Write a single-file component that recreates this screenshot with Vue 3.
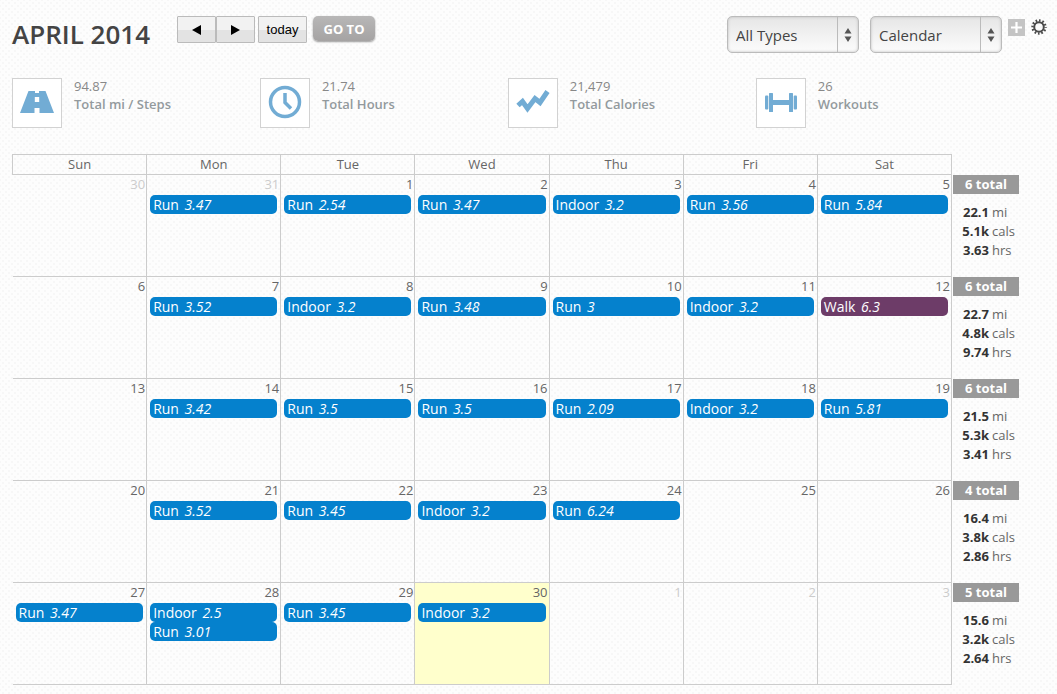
<script setup>
import { ref } from 'vue'

const type = ref('All Types')
const view = ref('Calendar')

const stats = [
  { icon: 'road', value: '94.87', label: 'Total mi / Steps' },
  { icon: 'clock', value: '21.74', label: 'Total Hours' },
  { icon: 'chart', value: '21,479', label: 'Total Calories' },
  { icon: 'weights', value: '26', label: 'Workouts' },
]

const weekdays = ['Sun', 'Mon', 'Tue', 'Wed', 'Thu', 'Fri', 'Sat']

const run = (distance) => ({ name: 'Run', distance })
const indoor = (distance) => ({ name: 'Indoor', distance })
const walk = (distance) => ({ name: 'Walk', distance, walk: true })

const weeks = [
  {
    first: 30, lastOfMonth: 31,
    events: [[], [run('3.47')], [run('2.54')], [run('3.47')], [indoor('3.2')], [run('3.56')], [run('5.84')]],
    total: 6, mi: '22.1', cals: '5.1k', hrs: '3.63',
  },
  {
    first: 6,
    events: [[], [run('3.52')], [indoor('3.2')], [run('3.48')], [run('3')], [indoor('3.2')], [walk('6.3')]],
    total: 6, mi: '22.7', cals: '4.8k', hrs: '9.74',
  },
  {
    first: 13,
    events: [[], [run('3.42')], [run('3.5')], [run('3.5')], [run('2.09')], [indoor('3.2')], [run('5.81')]],
    total: 6, mi: '21.5', cals: '5.3k', hrs: '3.41',
  },
  {
    first: 20,
    events: [[], [run('3.52')], [run('3.45')], [indoor('3.2')], [run('6.24')], [], []],
    total: 4, mi: '16.4', cals: '3.8k', hrs: '2.86',
  },
  {
    first: 27, lastOfMonth: 30, today: 30,
    events: [[run('3.47')], [indoor('2.5'), run('3.01')], [run('3.45')], [indoor('3.2')], [], [], []],
    total: 5, mi: '15.6', cals: '3.2k', hrs: '2.64',
  },
].map((week, w) => ({
  ...week,
  days: week.events.map((events, i) => {
    const raw = week.first + i
    const wraps = week.lastOfMonth && raw > week.lastOfMonth
    return {
      number: wraps ? raw - week.lastOfMonth : raw,
      other: w === 0 ? !wraps : Boolean(wraps),
      today: raw === week.today,
      events,
    }
  }),
}))
</script>

<template>
  <main class="page">
    <header class="toolbar">
      <h1>APRIL 2014</h1>
      <div class="nav">
        <div class="pair">
          <button type="button" class="nav-btn" aria-label="Previous month">
            <svg width="10" height="10" viewBox="0 0 10 10"><path d="M0 5 9 0V10Z" /></svg>
          </button>
          <button type="button" class="nav-btn" aria-label="Next month">
            <svg width="10" height="10" viewBox="0 0 10 10"><path d="M9 5 0 0V10Z" /></svg>
          </button>
        </div>
        <button type="button" class="nav-btn today-btn">today</button>
        <button type="button" class="goto">GO TO</button>
      </div>
      <div class="filters">
        <div class="picker">
          <select v-model="type" aria-label="Workout type"><option>All Types</option></select>
          <svg class="arrows" width="8" height="14" viewBox="0 0 8 14"><path d="M4 0 7.5 5.5H.5ZM4 14 .5 8.500H7.500Z" /></svg>
        </div>
        <div class="picker">
          <select v-model="view" aria-label="View"><option>Calendar</option></select>
          <svg class="arrows" width="8" height="14" viewBox="0 0 8 14"><path d="M4 0 7.5 5.5H.5ZM4 14 .5 8.500H7.500Z" /></svg>
        </div>
        <div class="tools">
          <button type="button" class="add" aria-label="Add workout">
            <svg width="17" height="17" viewBox="0 0 17 17"><path d="M8.500 3V14M3 8.500H14" stroke="#fff" stroke-width="2.200" /></svg>
          </button>
          <button type="button" class="gear" aria-label="Settings">
            <svg width="16" height="16" viewBox="0 0 16 16" fill="none" stroke="#4a4a4a">
              <circle cx="8" cy="8" r="4.800" stroke-width="2" />
              <circle cx="8" cy="8" r="6.500" stroke-width="2.400" stroke-dasharray="1.600 1.803" stroke-dashoffset="0.800" />
            </svg>
          </button>
        </div>
      </div>
    </header>

    <section class="stats" aria-label="Monthly totals">
      <div v-for="s in stats" :key="s.label" class="stat">
        <div class="tile">
          <svg v-if="s.icon === 'road'" width="34" height="22" viewBox="0 0 34 22">
            <path fill="#72acd4" fill-rule="evenodd" d="M8.500 0H15V2H19V0H25.500L34 22H19.500V17H14.500V22H0ZM14.800 6V11H19.200V6Z" />
          </svg>
          <svg v-else-if="s.icon === 'clock'" width="34" height="34" viewBox="0 0 34 34" fill="none" stroke="#72acd4">
            <circle cx="17" cy="17" r="14.500" stroke-width="3.500" />
            <path d="M17 8V17.500L23 23.500" stroke-width="3.500" />
          </svg>
          <svg v-else-if="s.icon === 'chart'" width="34" height="24" viewBox="0 0 34 24">
            <path fill="none" stroke="#72acd4" stroke-width="5" d="M2 15.500 6.500 11.500 11.500 18.500 19 8.500 24 12.500 31.500 1.500" />
          </svg>
          <svg v-else width="32" height="19" viewBox="0 0 32 19" fill="#72acd4">
            <rect x="0" y="2.500" width="3.300" height="14" rx="1" />
            <rect x="4" y="0" width="4" height="19" rx=".5" />
            <rect x="8" y="7" width="16" height="5" />
            <rect x="24" y="0" width="4" height="19" rx=".5" />
            <rect x="28.700" y="2.500" width="3.300" height="14" rx="1" />
          </svg>
        </div>
        <div class="figures">
          <div>{{ s.value }}</div>
          <div class="label">{{ s.label }}</div>
        </div>
      </div>
    </section>

    <table class="calendar">
      <thead>
        <tr>
          <th v-for="d in weekdays" :key="d" scope="col">{{ d }}</th>
          <td class="summary"></td>
        </tr>
      </thead>
      <tbody>
        <tr v-for="week in weeks" :key="week.first">
          <td v-for="day in week.days" :key="day.number" class="day" :class="{ other: day.other, today: day.today }">
            <div class="number">{{ day.number }}</div>
            <a v-for="e in day.events" :key="e.distance" href="#" class="event" :class="{ walk: e.walk }">{{ e.name }} <em>{{ e.distance }}</em></a>
          </td>
          <td class="summary">
            <div class="total">{{ week.total }} total</div>
            <div class="sums">
              <b>{{ week.mi }}</b><span>mi</span>
              <b>{{ week.cals }}</b><span>cals</span>
              <b>{{ week.hrs }}</b><span>hrs</span>
            </div>
          </td>
        </tr>
      </tbody>
    </table>
  </main>
</template>

<style>
body {
  background-color: #fdfdfd;
  background-image: radial-gradient(circle, #f7f7f7 1px, transparent 1px), radial-gradient(circle, #f7f7f7 1px, transparent 1px);
  background-size: 6px 6px;
  background-position: 0 0, 3px 3px;
}
</style>

<style scoped>
.page {
  padding: 15px 12px 9px;
  font-family: "Open Sans", "Noto Sans", sans-serif;
  font-size: 13px;
  line-height: 18px;
  color: #666;
}
.toolbar {
  display: flex;
  align-items: flex-start;
  height: 38px;
}
h1 {
  margin: 0;
  width: 165px;
  font-size: 26px;
  line-height: 38px;
  font-weight: 600;
  color: #444;
  white-space: nowrap;
}
.nav, .pair, .filters, .tools {
  display: flex;
  align-items: flex-start;
}
.nav {
  gap: 3px;
  padding-top: 1px;
}
button {
  padding: 0;
  border: 0;
  background: none;
  font: inherit;
}
button svg {
  display: block;
}
.nav-btn {
  display: flex;
  align-items: center;
  justify-content: center;
  width: 39px;
  height: 27px;
  border: 1px solid #bbb;
  border-radius: 1px;
  background: linear-gradient(#f2f2f2 50%, #e3e3e3 50%);
  font-family: "Liberation Sans", Arial, sans-serif;
  color: #000;
}
.today-btn {
  width: 49px;
}
.goto {
  margin-left: 3px;
  width: 62px;
  height: 25px;
  border-radius: 5px;
  background: linear-gradient(#b8b7b7, #a5a3a3);
  box-shadow: 0 1px 2px #999;
  font-weight: 700;
  color: #fff;
}
.filters {
  margin-left: auto;
  margin-right: -2px;
  padding-top: 1px;
}
.picker {
  position: relative;
  width: 132px;
  margin-right: 11px;
}
.picker + .picker {
  margin-right: 6px;
}
select {
  display: block;
  appearance: none;
  width: 100%;
  height: 37px;
  padding: 0 8px;
  border: 1px solid #bbb;
  border-radius: 5px;
  background: linear-gradient(90deg, transparent 109px, #bbb 109px, #bbb 110px, transparent 110px), linear-gradient(#e6e6e6, #fcfcfc);
  box-shadow: inset 0 0 3px #bbb;
  font: 15px/20px "Open Sans", "Noto Sans", sans-serif;
  color: #444;
}
.arrows {
  position: absolute;
  top: 12px;
  right: 7px;
  fill: #555;
  pointer-events: none;
}
.tools {
  gap: 6px;
  padding-top: 3px;
}
.add {
  background: #c4c4c4;
}
.stats {
  display: grid;
  grid-template-columns: repeat(4, 24%);
  margin-top: 24px;
}
.stat {
  display: flex;
  gap: 12px;
  color: #888;
}
.tile {
  display: flex;
  align-items: center;
  justify-content: center;
  box-sizing: border-box;
  width: 50px;
  height: 50px;
  margin-top: 1px;
  padding-bottom: 2px;
  border: 1px solid #d2d2d2;
  background: #fff;
}
.label {
  font-weight: 600;
  color: #939a9d;
}
.calendar {
  width: 100%;
  margin-top: 26px;
  border-collapse: collapse;
  table-layout: fixed;
}
th {
  height: 19px;
  padding: 0;
  border: 1px solid #ccc;
  font-weight: 400;
  line-height: 19px;
}
.day {
  height: 101px;
  padding: 0 2px 0 3px;
  border: solid #ccc;
  border-width: 1px 1px 1px 0;
  vertical-align: top;
}
.number {
  text-align: right;
  height: 20px;
  margin-right: -1px;
}
.other .number {
  color: #ccc;
}
.today {
  background: #ffffcc;
}
.event {
  display: block;
  height: 19px;
  padding-left: 3px;
  margin-right: 1px;
  border-radius: 5px;
  background: #0581cd;
  font-size: 14px;
  line-height: 19px;
  color: #fff;
  text-decoration: none;
  white-space: nowrap;
  overflow: hidden;
}
.event em {
  margin-left: 2px;
}
.walk {
  background: #6d3c68;
}
.summary {
  width: 93px;
  padding: 0;
  vertical-align: top;
}
.total {
  width: 66px;
  height: 19px;
  margin: 0 0 0 1px;
  background: #999;
  line-height: 19px;
  font-weight: 700;
  text-align: center;
  color: #fff;
}
.sums {
  display: grid;
  grid-template-columns: 37px auto;
  column-gap: 3px;
  margin-top: 9px;
  line-height: 19px;
}
.sums b {
  color: #333;
  text-align: right;
}
</style>
